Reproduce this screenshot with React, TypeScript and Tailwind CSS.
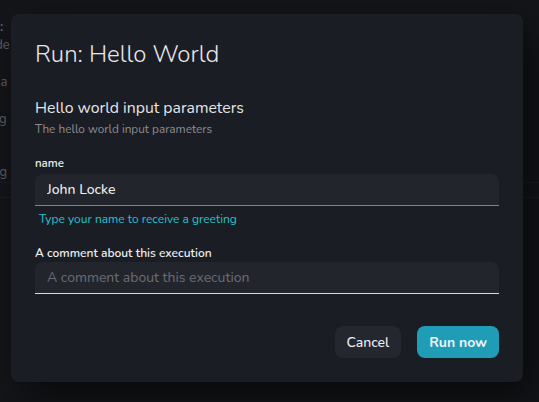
import { useState } from 'react';

const FONT = { fontFamily: 'Nunito, Lato, "Noto Sans", sans-serif' };

function BackgroundPage() {
  return (
    <div className="h-[402px] w-[539px] bg-[#141519] overflow-hidden">
      <div className="flex flex-col text-[13px] text-[#5c5f66] -ml-[12px]">
        <span className="h-[18px] mt-[18px] leading-[18px] font-bold pl-[12px]">:</span>
        <span className="h-[18px] leading-[18px]">ode</span>
        <span className="h-[18px] mt-[19px] leading-[18px]">ssa</span>
        <span className="h-[18px] mt-[19px] leading-[18px]">log</span>
        <span className="h-[18px] mt-[35px] leading-[18px]">tag</span>
      </div>
      <div className="mt-[1px] h-[16px] border-y border-[#1c1d22]" />
    </div>
  );
}

export default function App() {
  const [name, setName] = useState('John Locke');
  const [comment, setComment] = useState('');

  return (
    <div className="relative h-[402px] w-[539px] overflow-hidden" style={FONT}>
      <BackgroundPage />

      {/* Modal */}
      <div className="absolute left-[11px] top-[14px] w-[512px] h-[368px] rounded-lg bg-[#1b1d24] shadow-[12px_16px_40px_rgba(0,0,0,0.55)] px-[24px] pt-[24px]">
        <h2 className="text-[24px] font-light leading-[32px] text-[#e6e7e9]">Run: Hello World</h2>

        <div className="mt-[27px]">
          <h3 className="text-[15.8px] leading-[22px] text-[#e4e5e7]">Hello world input parameters</h3>
          <p className="text-[11.8px] leading-[16px] text-[#8b8e94] mt-[2px]">The hello world input parameters</p>
        </div>

        <div className="mt-[18px]">
          <label className="block text-[11.5px] font-semibold leading-[16px] text-[#eceef0]">name</label>
          <div className="mt-[3px] h-[32px] rounded-t-lg bg-[#23252d] border-b border-[#2aa6b4] flex items-center px-[12px]">
            <input
              value={name}
              onChange={(e) => setName(e.target.value)}
              className="w-full bg-transparent outline-none text-[14px] font-medium text-[#eceef0]"
              style={FONT}
            />
          </div>
          <p className="mt-[5px] ml-[4px] text-[12px] leading-[16px] text-[#22c4d2]">Type your name to receive a greeting</p>
        </div>

        <div className="mt-[18px]">
          <label className="block text-[12px] font-semibold leading-[16px] text-[#eceef0]">A comment about this execution</label>
          <div className="mt-[1px] h-[32px] rounded-t-lg bg-[#23252d] border-b border-[#d8d9db] flex items-center px-[12px]">
            <input
              value={comment}
              onChange={(e) => setComment(e.target.value)}
              placeholder="A comment about this execution"
              className="w-full bg-transparent outline-none text-[14px] text-[#eceef0] placeholder:text-[#6a6d74]"
              style={FONT}
            />
          </div>
        </div>

        <div className="mt-[32px] flex justify-end gap-[16px]">
          <button type="button" className="h-[32px] px-[12px] rounded-lg bg-[#25272f] text-[14px] font-medium text-[#eceef0]">
            Cancel
          </button>
          <button type="button" className="h-[32px] px-[12px] rounded-lg bg-[#1f9db6] text-[14px] font-bold text-[#f2f4f5]">
            Run now
          </button>
        </div>
      </div>
    </div>
  );
}
